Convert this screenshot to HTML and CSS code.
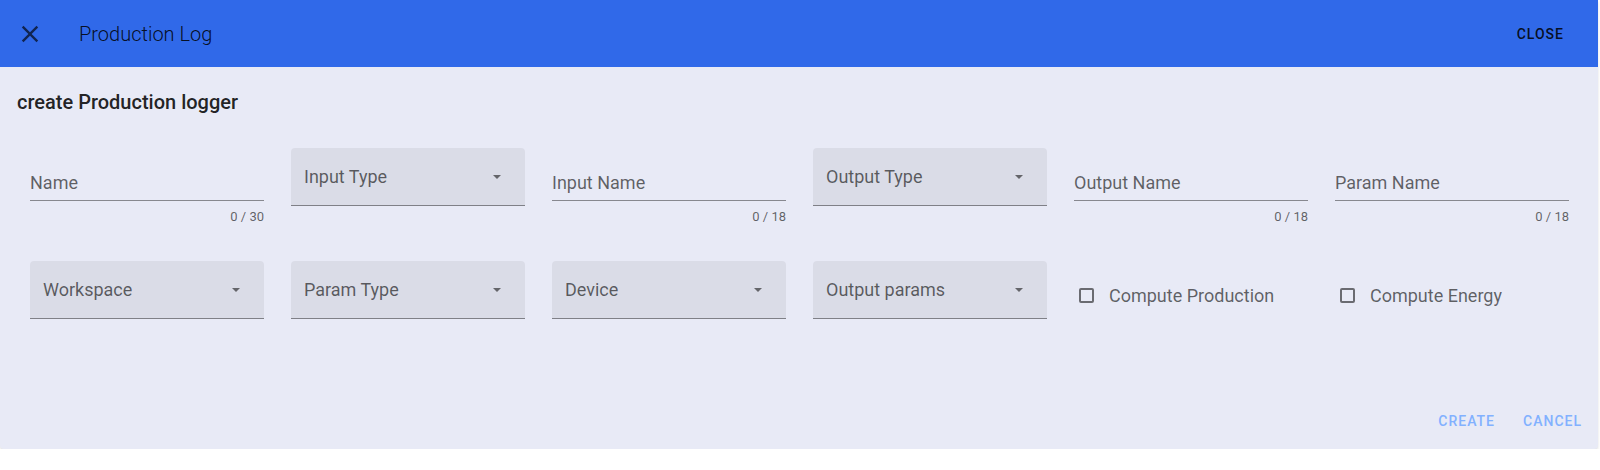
FILE: index.html
```html
<!DOCTYPE html>
<html lang="en">
<head>
    <meta charset="UTF-8">
    <title>Production Log</title>
    <link rel="stylesheet" href="styles.css">
</head>
<body>
    <div class="dialog">
        <header class="toolbar">
            <svg class="close-icon" viewBox="0 0 24 24"><path d="M19 6.41L17.59 5 12 10.59 6.41 5 5 6.41 10.59 12 5 17.59 6.41 19 12 13.41 17.59 19 19 17.59 13.41 12z"/></svg>
            <span class="toolbar-title">Production Log</span>
            <span class="spacer"></span>
            <button class="btn btn-dark">Close</button>
        </header>

        <div class="card-title">create Production logger</div>

        <form class="form">
            <div class="text-field">
                <div class="tf-input">Name</div>
                <div class="counter">0 / 30</div>
            </div>
            <div class="select"><span>Input Type</span><svg class="arrow" viewBox="0 0 10 5"><path d="M0 0L5 5L10 0Z"/></svg></div>
            <div class="text-field">
                <div class="tf-input">Input Name</div>
                <div class="counter">0 / 18</div>
            </div>
            <div class="select"><span>Output Type</span><svg class="arrow" viewBox="0 0 10 5"><path d="M0 0L5 5L10 0Z"/></svg></div>
            <div class="text-field">
                <div class="tf-input">Output Name</div>
                <div class="counter">0 / 18</div>
            </div>
            <div class="text-field">
                <div class="tf-input">Param Name</div>
                <div class="counter">0 / 18</div>
            </div>

            <div class="select"><span>Workspace</span><svg class="arrow" viewBox="0 0 10 5"><path d="M0 0L5 5L10 0Z"/></svg></div>
            <div class="select"><span>Param Type</span><svg class="arrow" viewBox="0 0 10 5"><path d="M0 0L5 5L10 0Z"/></svg></div>
            <div class="select"><span>Device</span><svg class="arrow" viewBox="0 0 10 5"><path d="M0 0L5 5L10 0Z"/></svg></div>
            <div class="select"><span>Output params</span><svg class="arrow" viewBox="0 0 10 5"><path d="M0 0L5 5L10 0Z"/></svg></div>
            <label class="checkbox"><span class="box"></span>Compute Production</label>
            <label class="checkbox"><span class="box"></span>Compute Energy</label>
        </form>

        <div class="actions">
            <button class="btn btn-light">Create</button>
            <button class="btn btn-light">Cancel</button>
        </div>
    </div>
</body>
</html>
```

FILE: styles.css
```css
body {
    margin: 0;
    background: #ffffff;
    font-family: Roboto, "Liberation Sans", sans-serif;
}
.dialog {
    width: 1598px;
    height: 449px;
    background: #e8eaf6;
    border-radius: 0 0 4px 4px;
    box-shadow: 0 2px 3px rgba(0, 0, 0, 0.12);
    display: flex;
    flex-direction: column;
}
.toolbar {
    height: 67px;
    background: #3069e9;
    display: flex;
    align-items: center;
    padding: 0 34px 0 16px;
}
.close-icon {
    width: 28px;
    height: 28px;
    fill: rgba(0, 0, 0, 0.65);
}
.toolbar-title {
    margin-left: 35px;
    font-size: 20px;
    font-weight: 300;
    color: rgba(0, 0, 0, 0.87);
}
.spacer {
    flex: 1;
}
.btn {
    background: none;
    border: none;
    padding: 0;
    font-family: inherit;
    font-size: 14px;
    font-weight: 500;
    letter-spacing: 1px;
    text-transform: uppercase;
    cursor: pointer;
}
.btn-dark {
    color: rgba(0, 0, 0, 0.87);
}
.btn-light {
    color: #82b1ff;
    height: 36px;
}
.card-title {
    padding: 23px 17px 0;
    font-size: 20px;
    line-height: 24px;
    font-weight: 500;
    color: rgba(0, 0, 0, 0.87);
}
.form {
    display: grid;
    grid-template-columns: repeat(6, 234px);
    column-gap: 27px;
    row-gap: 36px;
    align-items: start;
    padding: 34px 0 0 30px;
}
.text-field {
    padding-top: 20px;
}
.tf-input {
    height: 32px;
    line-height: 30px;
    font-size: 18px;
    color: rgba(0, 0, 0, 0.6);
    border-bottom: 1px solid rgba(0, 0, 0, 0.42);
}
.counter {
    margin-top: 8px;
    font-size: 13px;
    line-height: 16px;
    text-align: right;
    color: rgba(0, 0, 0, 0.6);
}
.select {
    height: 57px;
    background: rgba(0, 0, 0, 0.06);
    border-radius: 4px 4px 0 0;
    border-bottom: 1px solid rgba(0, 0, 0, 0.42);
    display: flex;
    align-items: center;
    justify-content: space-between;
    padding: 0 24px 0 13px;
    font-size: 18px;
    color: rgba(0, 0, 0, 0.6);
}
.arrow {
    width: 8px;
    height: 4px;
    fill: rgba(0, 0, 0, 0.54);
}
.checkbox {
    display: flex;
    align-items: center;
    height: 24px;
    margin-top: 22px;
    padding-left: 5px;
    font-size: 18px;
    color: rgba(0, 0, 0, 0.6);
}
.box {
    width: 11px;
    height: 11px;
    border: 2px solid rgba(0, 0, 0, 0.54);
    border-radius: 2px;
    margin-right: 15px;
}
.actions {
    margin-top: auto;
    display: flex;
    justify-content: flex-end;
    gap: 28px;
    padding: 0 16px 10px 0;
}
```
